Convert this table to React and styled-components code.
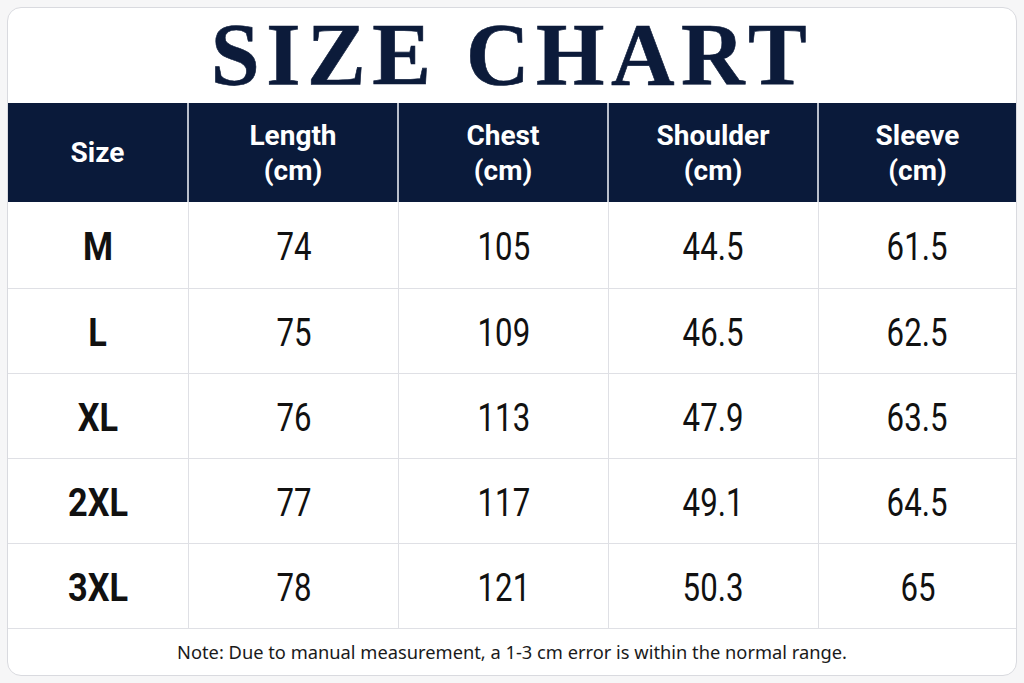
import styled, { createGlobalStyle } from "styled-components";

const GlobalStyle = createGlobalStyle`
  * { box-sizing: border-box; }
  body {
    margin: 0;
    background: #f6f6f7;
    font-family: Roboto, "Liberation Sans", sans-serif;
  }
`;

const columns = [
    { title: "Size" },
    { title: "Length", unit: "(cm)" },
    { title: "Chest", unit: "(cm)" },
    { title: "Shoulder", unit: "(cm)" },
    { title: "Sleeve", unit: "(cm)" },
];

const rows = [
    ["M", "74", "105", "44.5", "61.5"],
    ["L", "75", "109", "46.5", "62.5"],
    ["XL", "76", "113", "47.9", "63.5"],
    ["2XL", "77", "117", "49.1", "64.5"],
    ["3XL", "78", "121", "50.3", "65"],
];

export default function App() {
    return (
        <>
            <GlobalStyle />
            <Page>
                <Card>
                    <Title>SIZE CHART</Title>
                    <Table>
                        {columns.map((c, i) => (
                            <HeadCell key={c.title} $last={i === columns.length - 1}>
                                <span>{c.title}</span>
                                {c.unit && <span>{c.unit}</span>}
                            </HeadCell>
                        ))}
                        {rows.map((r) =>
                            r.map((v, i) => (
                                <Cell key={r[0] + i} $last={i === r.length - 1}>
                                    <Value $bold={i === 0}>{v}</Value>
                                </Cell>
                            ))
                        )}
                    </Table>
                    <Note>Note: Due to manual measurement, a 1-3 cm error is within the normal range.</Note>
                </Card>
            </Page>
        </>
    );
}

const Page = styled.div`
width: 1024px;
height: 683px;
padding: 7px;
`

const Card = styled.div`
width: 1010px;
height: 669px;
background: #ffffff;
border: 1px solid #d9dadf;
border-radius: 14px;
overflow: hidden;
display: flex;
flex-direction: column;
`

const Title = styled.h1`
margin: 0;
height: 95px;
display: flex;
align-items: center;
justify-content: center;
padding-bottom: 2px;
font-family: "Liberation Serif", "DejaVu Serif", serif;
font-weight: 700;
font-size: 88px;
letter-spacing: 6.5px;
color: #0c1b3a;
-webkit-text-stroke: 0.6px #0c1b3a;
`

const Table = styled.div`
display: grid;
grid-template-columns: 181px 210px 210px 210px 1fr;
grid-template-rows: 99px 87px repeat(4, 85px);
`

const HeadCell = styled.div`
background: #0a1a3a;
color: #ffffff;
display: flex;
flex-direction: column;
align-items: center;
justify-content: center;
font-weight: 700;
font-size: 28px;
line-height: 35px;
border-right: ${(p) => (p.$last ? "none" : "2px solid #b9bfcb")};
`

const Cell = styled.div`
display: flex;
align-items: center;
justify-content: center;
border-right: ${(p) => (p.$last ? "none" : "1px solid #dfe0e5")};
border-bottom: 1px solid #dfe0e5;
`

const Value = styled.span`
display: inline-block;
font-size: 39px;
font-weight: ${(p) => (p.$bold ? 700 : 400)};
color: #111111;
transform: scaleX(${(p) => (p.$bold ? 0.88 : 0.8)});
padding-top: 4px;
`

const Note = styled.div`
flex: 1;
display: flex;
align-items: center;
justify-content: center;
font-family: "Noto Sans", "Open Sans", sans-serif;
font-size: 18.3px;
color: #1a1a1a;
padding-bottom: 2px;
`
